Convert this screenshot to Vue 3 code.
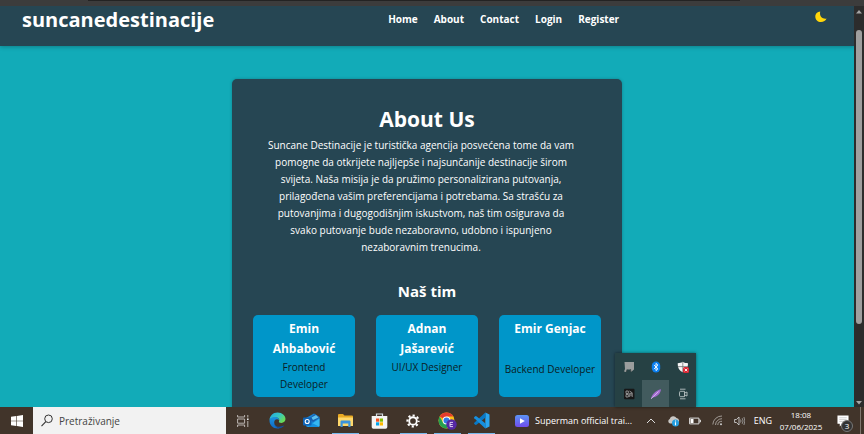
<script setup>
const links = ['Home', 'About', 'Contact', 'Login', 'Register']

const about = `Suncane Destinacije je turistička agencija posvećena tome da vam
pomogne da otkrijete najljepše i najsunčanije destinacije širom
svijeta. Naša misija je da pružimo personalizirana putovanja,
prilagođena vašim preferencijama i potrebama. Sa strašću za
putovanjima i dugogodišnjim iskustvom, naš tim osigurava da
svako putovanje bude nezaboravno, udobno i ispunjeno
nezaboravnim trenucima.`

const team = [
  { name: 'Emin Ahbabović', role: 'Frontend Developer' },
  { name: 'Adnan Jašarević', role: 'UI/UX Designer' },
  { name: 'Emir Genjac', role: 'Backend Developer', spread: true },
]
</script>

<template>
  <div class="screen">
    <div class="chrome-edge"><span></span></div>

    <div class="viewport">
      <div class="page">
        <header class="header">
          <a class="logo" href="#">suncanedestinacije</a>
          <nav class="nav">
            <a v-for="l in links" :key="l" href="#">{{ l }}</a>
          </nav>
          <button class="theme" aria-label="Dark mode">
            <svg width="12" height="12" viewBox="0 0 12 12"><path d="M5.200.6C2.400.8.300 3 .3 5.700c0 3 2.500 5.300 5.700 5.300 2.600 0 4.700-1.300 5.600-3.400C8.500 8.400 4 6.500 5.200.6Z" fill="#ffd60a" /></svg>
          </button>
        </header>
        <main class="main">
          <section class="about">
            <h1>About Us</h1>
            <p class="text">{{ about }}</p>
            <h2>Naš tim</h2>
            <div class="team">
              <article v-for="m in team" :key="m.name" class="member" :class="{ spread: m.spread }">
                <h3>{{ m.name }}</h3>
                <p>{{ m.role }}</p>
              </article>
            </div>
          </section>
        </main>
      </div>
      <div class="scrollbar">
        <svg width="10" height="11" viewBox="0 0 10 11"><path d="M2 7.500 5 4l3 3.500Z" fill="#a5a5a5" /></svg>
        <div class="track"><div class="thumb"></div></div>
        <svg width="10" height="9" viewBox="0 0 10 9"><path d="M2 3l3 3.500L8 3Z" fill="#a5a5a5" /></svg>
      </div>
      <div class="flyout">
        <button aria-label="Touch device">
          <svg width="12" height="12" viewBox="0 0 12 12"><path d="M1.500 1H11v7.500L8 11 7.500 8.500H4L3 11 1 10.500 2 8Z" fill="#9b9d9d" /><path d="M4 8.500 3.500 11M7.500 8l.5 3" stroke="#3a4444" stroke-width=".7" /></svg>
        </button>
        <button aria-label="Bluetooth">
          <svg width="12" height="12" viewBox="0 0 12 12"><rect x="1.800" y=".5" width="8.400" height="11" rx="4.200" fill="#0a7ff0" /><path d="M3.900 4 8 7.800 6 9.600V2.400L8 4.200 3.900 8" fill="none" stroke="#fff" stroke-width=".9" /></svg>
        </button>
        <button aria-label="Security">
          <svg width="12" height="12" viewBox="0 0 12 12"><path d="M5.800.8C7.500 2 9 2.200 11 2.200c0 4.300-1.500 7.500-5.200 9C2 9.500.7 6.500.7 2.200c2 0 3.500-.3 5.100-1.400Z" fill="#f5f5f5" /><path d="M5.800 1v10M.7 5.600H11" stroke="#606767" stroke-width=".7" /><rect x="6" y="6" width="6" height="6" rx="1.500" fill="#dc2935" /><path d="m7.700 7.700 2.600 2.600m0-2.600-2.600 2.600" stroke="#fff" stroke-width=".9" /></svg>
        </button>
        <button aria-label="Monitor">
          <svg width="12" height="12" viewBox="0 0 12 12"><rect x="1" y=".8" width="10.500" height="10.500" rx="1" fill="#171717" /><path d="M3 3h2.300v2.500H3zM3 6.500h2.300V9H3zM6.700 9V5.300h2.500V9M6.500 3l3 2M7 7h2" fill="none" stroke="#aaa" stroke-width=".8" /></svg>
        </button>
        <button class="active" aria-label="Feather">
          <svg width="12" height="12" viewBox="0 0 12 12"><path d="M1 10.800C1.800 6.500 5.200 2.500 11 1.200 10.500 6 6.600 9.200 2.600 9.400Z" fill="#a36bd0" /><path d="M1 10.800 8.500 3.500" stroke="#e2c8f6" stroke-width=".8" /></svg>
        </button>
        <button aria-label="Capture">
          <svg width="12" height="12" viewBox="0 0 12 12"><path d="M3 1.200h5.500M3 10.800h5.500M3.500 3.300h4v5.400h-4c-1 0-1-1-1-2.700s0-2.700 1-2.700ZM7.700 5 10 4v4L7.700 7" fill="none" stroke="#b9c3c3" stroke-width=".9" /></svg>
        </button>
      </div>
    </div>

    <footer class="taskbar">
      <button class="start" aria-label="Start">
        <svg width="12" height="12" viewBox="0 0 12 12"><path d="M0 1.700 5.300 1v4.700H0ZM5.900.9 12 0v5.700H5.900ZM0 6.300h5.300V11L0 10.300ZM5.900 6.300H12V12l-6.100-.9Z" fill="#fff" /></svg>
      </button>
      <label class="search">
        <svg width="12" height="13" viewBox="0 0 12 13"><circle cx="7.500" cy="4.800" r="3.800" fill="none" stroke="#333" stroke-width="1" /><path d="M4.800 7.600.5 12.200" stroke="#333" stroke-width="1.100" /></svg>
        <input type="text" placeholder="Pretraživanje" aria-label="Pretraživanje" />
      </label>
      <button class="app" aria-label="Task view">
        <svg width="12" height="12" viewBox="0 0 12 12"><path d="M.6 0v2h7V0M.6 12v-2h7v2M.6 4h7v4.200h-7ZM10.800 0v2.500M10.800 6v6" fill="none" stroke="#c7c2bd" stroke-width=".9" /><path d="M10 3.500h1.600v1.600H10z" fill="#eee" /></svg>
      </button>
      <button class="app" aria-label="Edge">
        <svg width="17" height="17" viewBox="0 0 17 17">
          <defs>
            <linearGradient id="edgeTop" x1="0" y1="0" x2="1" y2=".6"><stop offset="0" stop-color="#22a7e0" /><stop offset=".55" stop-color="#35c6c5" /><stop offset="1" stop-color="#6bdc54" /></linearGradient>
            <linearGradient id="edgeSide" x1="0" y1="0" x2="0" y2="1"><stop offset="0" stop-color="#1a93e0" /><stop offset="1" stop-color="#1269c2" /></linearGradient>
          </defs>
          <path d="M.5 8.500C.5 4 4 .5 8.600.5c4.500 0 7.900 3.100 7.900 6.600 0 2.300-1.800 3.900-4.100 3.900-1.800 0-3-.7-2.400-1.700.7-1.200.2-3.800-3.100-3.800C3.700 5.500.5 6.700.5 8.500Z" fill="url(#edgeTop)" />
          <path d="M.5 8.500C.5 6.500 3 5 5.800 5.100c2.900 0 4.400 1.800 4.300 3.200C9.600 7.600 8.900 7.300 8 7.300c-1.800 0-3 1.500-2.800 3.600.3 2.800 2.800 4.900 5.400 5.300-.7.200-1.300.3-2.100.3C4 16.500.5 13 .5 8.500Z" fill="url(#edgeSide)" />
          <path d="M5.200 10.500c0 3.400 3.900 5.200 7.300 3.800 1.200-.4 2.200-.7 2.800-.7-1 1.500-2.700 2.500-4.700 2.700-3.300-.3-5.700-2.900-5.400-5.800Z" fill="#114f9e" />
        </svg>
      </button>
      <button class="app" aria-label="Outlook">
        <svg width="17" height="15" viewBox="0 0 17 15">
          <path d="M3 5 11 .6 16.500 4v8.500q0 1.500-1.500 1.500H5q-2 0-2-1.500Z" fill="#1684d8" />
          <path d="M6 5.500 12 1l4.500 3.500L10 9Z" fill="#1b5fae" /><path d="M8.500 4.500 13 2l2.500 2.500L10 7Z" fill="#5dc0ee" />
          <path d="M4 14 16.500 5.500v7q0 1.500-1.500 1.500Z" fill="#35b6f1" /><path d="m9 10 7 3.500q-.4.500-1 .5H5Z" fill="#1490df" />
          <rect y="4.500" width="8.500" height="8" rx="1" fill="#0f64b8" /><circle cx="4.200" cy="8.500" r="2" fill="none" stroke="#fff" stroke-width="1.100" />
        </svg>
      </button>
      <button class="app open" aria-label="File Explorer">
        <svg width="15" height="13" viewBox="0 0 15 13"><path d="M0 1q0-1 1-1h4l1.500 1.600H14q1 0 1 1V12H0Z" fill="#e9a923" /><path d="M0 3.500h15V12H0Z" fill="#ffd86b" /><path d="M2.500 7.500q0-1 1-1h8q1 0 1 1V13h-2.200V9.500H4.700V13H2.500Z" fill="#3a93dc" /></svg>
      </button>
      <button class="app" aria-label="Store">
        <svg width="17" height="16" viewBox="0 0 17 16"><path d="M5.500 4V1h6v3" fill="none" stroke="#d4dce2" stroke-width="1.200" /><path d="M.7 3h15.600v11q0 1.700-1.700 1.700H2.400Q.7 15.700.7 14Z" fill="#f4f4f4" /><path d="M5 5.500h3.200v3.200H5z" fill="#f25022" /><path d="M8.800 5.500H12v3.200H8.800z" fill="#7fba00" /><path d="M5 9.300h3.200v3.200H5z" fill="#00a4ef" /><path d="M8.800 9.300H12v3.200H8.800z" fill="#ffb900" /></svg>
      </button>
      <button class="app open" aria-label="Settings">
        <svg width="14" height="14" viewBox="0 0 14 14"><circle cx="7" cy="7" r="5.600" fill="none" stroke="#fff" stroke-width="2" stroke-dasharray="2.200 2.198" stroke-dashoffset="1.100" /><circle cx="7" cy="7" r="3.800" fill="none" stroke="#fff" stroke-width="1.900" /></svg>
      </button>
      <button class="app open" aria-label="Chrome">
        <svg width="19" height="18" viewBox="0 0 19 18"><circle cx="8.500" cy="8.500" r="8" fill="#fbc116" /><path d="M8.500 8.500 1.600 4.500A8 8 0 0 1 15.400 4.500Z" fill="#e33b2e" /><path d="M8.500 4.500h6.900L12 10.500Z" fill="#fbc116" /><path d="M1.600 4.500A8 8 0 0 0 8.500 16.500L12 10.500 8.500 8.500 5 10.500Z" fill="#26a050" /><circle cx="8.500" cy="8.500" r="3.900" fill="#fff" /><circle cx="8.500" cy="8.500" r="3" fill="#3478e5" /><circle cx="13.500" cy="12.500" r="5.200" fill="#5527a5" /><path d="M15 10.400h-3v4.200h3M12 12.500h2.700" stroke="#e9dcf8" stroke-width=".9" fill="none" /></svg>
      </button>
      <button class="app open" aria-label="Visual Studio Code">
        <svg width="17" height="17" viewBox="0 0 17 17"><path d="M12.300.5 16.500 2.500v12l-4.200 2Z" fill="#2aa5f0" /><path d="m12.300.5-11 10.200q-.6.600 0 1.200l1 .9q.5.400 1.100 0l9.200-7.200Z" fill="#0878c6" /><path d="M12.300 16.500 1.300 6.300q-.6-.6 0-1.200l1-.9q.5-.4 1.100 0l9.200 7.200Z" fill="#168fdf" /></svg>
      </button>
      <button class="video">
        <svg width="14" height="12" viewBox="0 0 14 12"><defs><linearGradient id="vid" x2="0" y2="1"><stop stop-color="#5b94f5" /><stop offset="1" stop-color="#704cec" /></linearGradient></defs><rect width="14" height="12" rx="2.500" fill="url(#vid)" /><path d="M5 3.200 9.800 6 5 8.800Z" fill="#fff" /></svg>
        <span>Superman official trai...</span>
      </button>
      <div class="tray">
        <button aria-label="Show hidden icons"><svg width="10" height="10" viewBox="0 0 10 10"><path d="m1 7 4-4 4 4" fill="none" stroke="#ddd" stroke-width="1" /></svg></button>
        <button aria-label="OneDrive"><svg width="13" height="12" viewBox="0 0 13 12"><path d="M3 8.500A2.400 2.400 0 0 1 2.700 4 3.800 3.800 0 0 1 9.500 3a2.900 2.900 0 0 1 1 5.500Z" fill="#c9c7c4" /><circle cx="8.500" cy="8" r="3.500" fill="#249ee0" /><path d="M8.500 7.300v2.900M8.500 5.500v1" stroke="#fff" stroke-width="1.100" /></svg></button>
        <button aria-label="Battery"><svg width="12" height="8" viewBox="0 0 12 8"><path d="M.6 1.100h9.300v5.800H.6ZM10 3h1.400v2H10" fill="none" stroke="#ddd" stroke-width="1" /><path d="M1.500 2h3v4h-3z" fill="#fff" /></svg></button>
        <button aria-label="Network"><svg width="11" height="11" viewBox="0 0 11 11"><g fill="none" stroke="#aaa5a0" stroke-width=".9"><path d="M.8 9.500A9 9 0 0 1 10 1M3.500 10A6.500 6.500 0 0 1 10 3.700M5.800 10A4 4 0 0 1 10 6.300" /></g><circle cx="9" cy="9.300" r="1" fill="#ccc" /></svg></button>
        <button aria-label="Volume"><svg width="11" height="10" viewBox="0 0 11 10"><path d="M.6 3.500h1.800L5 1v8L2.400 6.500H.6Z" fill="none" stroke="#ccc" stroke-width=".9" /><path d="M6.500 3.500q1 1.500 0 3M8.200 2.200q1.700 2.800 0 5.600M9.900 1q2 4 0 8" fill="none" stroke="#aaa" stroke-width=".8" /></svg></button>
      </div>
      <span class="lang">ENG</span>
      <time class="clock"><span>18:08</span><span>07/06/2025</span></time>
      <button class="notify" aria-label="Notifications">
        <svg width="12" height="12" viewBox="0 0 13 13"><path d="M.5.500h12v9H6L3 12.500v-3H.5Z" fill="#fff" /><path d="M2.500 3h8M2.500 5h8M2.500 7h5" stroke="#aaa" stroke-width=".6" /></svg>
        <span>3</span>
      </button>
      <div class="peek"></div>
    </footer>
  </div>
</template>

<style>
html, body { margin: 0; }
</style>

<style scoped>
.screen {
  display: grid;
  grid-template-rows: 6px minmax(0, 1fr) 27px;
  height: 100vh;
  overflow: hidden;
  font-family: "Open Sans", "Noto Sans", sans-serif;
}
.screen * { box-sizing: border-box; }
h1, h2, h3, p { margin: 0; }
button {
  display: flex;
  align-items: center;
  justify-content: center;
  padding: 0;
  border: 0;
  background: none;
  color: inherit;
  font: inherit;
}
a { color: inherit; text-decoration: none; }
svg { display: block; flex: none; }

.chrome-edge { background: #3c3c3c; padding: 0 124px 0 88px; }
.chrome-edge span { display: block; height: 1px; background: #232323; }

.viewport {
  position: relative;
  display: grid;
  grid-template-columns: minmax(0, 1fr) 10px;
  min-height: 0;
}
.page { overflow: hidden; background: #12abb8; }
.header {
  display: flex;
  align-items: flex-start;
  justify-content: space-between;
  height: 40px;
  padding: 0 27px 0 22px;
  background: #264653;
  color: #fff;
  box-shadow: 0 1px 4px rgba(0, 0, 0, .25);
}
.logo { font-size: 20px; line-height: 27px; font-weight: 700; }
.nav { display: flex; gap: 16px; font-size: 10px; line-height: 26px; font-weight: 700; }
.theme { justify-content: flex-end; width: 34px; height: 22px; }

.main { display: flex; justify-content: center; padding-top: 33px; }
.about {
  width: 390px;
  padding: 24px 21px 40px;
  border-radius: 5px;
  background: #264653;
  box-shadow: 0 0 3px rgba(0, 0, 0, .25);
  color: #fff;
  text-align: center;
}
h1 { font-size: 21px; line-height: 33px; font-weight: 700; }
.text {
  padding: 1px 12px 0 0;
  font-size: 10px;
  line-height: 17px;
  white-space: pre-line;
}
h2 { margin: 23px 0 12px; font-size: 15px; line-height: 24px; font-weight: 700; }
.team { display: grid; grid-template-columns: repeat(3, minmax(0, 1fr)); gap: 21px; }
.member {
  display: flex;
  flex-direction: column;
  height: 82px;
  padding: 4px 2px;
  border-radius: 5px;
  background: #0096c9;
}
.member h3, .member p { padding: 0 12px; }
h3 { font-size: 12px; line-height: 20px; font-weight: 700; }
.member p { color: #0b1c24; font-size: 10px; line-height: 17px; }
.spread { justify-content: space-between; padding-bottom: 19px; }
.spread h3, .spread p { padding: 0; }

.scrollbar { display: flex; flex-direction: column; background: #2c2c2c; }
.track { flex: 1; padding: 13px 2px 0; }
.thumb { height: 80%; border-radius: 3px; background: #9f9f9f; }

.flyout {
  position: absolute;
  right: 168px;
  bottom: 0;
  display: grid;
  grid-template-columns: repeat(3, 27px);
  grid-auto-rows: 27px;
  background: #264144;
  box-shadow: 0 0 3px rgba(0, 0, 0, .5);
}
.active { background: #425b5e; }

.taskbar { display: flex; align-items: stretch; background: #41342a; color: #fff; font-size: 10px; }
.start { width: 33px; }
.search { display: flex; align-items: center; gap: 6px; width: 193px; padding-left: 8px; background: #f2f2f2; }
.search input {
  flex: 1;
  min-width: 0;
  padding: 0;
  border: 0;
  outline: 0;
  background: none;
  font: inherit;
}
.search input::placeholder { color: #444; opacity: 1; }
.app { width: 34px; }
.open { background: linear-gradient(#76b9ed, #76b9ed) center bottom / 27px 1px no-repeat; }
.video { flex: none; gap: 6px; margin-left: 17px; font-size: 9px; white-space: nowrap; }
.tray { display: flex; margin-left: auto; }
.tray button { width: 22px; }
.lang { width: 26px; text-align: center; line-height: 27px; font-size: 9px; }
.clock { display: flex; flex-direction: column; justify-content: center; width: 50px; text-align: center; font-size: 8px; line-height: 12px; }
.notify { position: relative; width: 34px; }
.notify span {
  position: absolute;
  left: 15px;
  top: 13px;
  width: 12px;
  height: 12px;
  border: 1px solid #777;
  border-radius: 50%;
  background: #333;
  font-size: 8px;
  line-height: 10px;
}
.peek { width: 4px; border-left: 1px solid #80776f; }
</style>
